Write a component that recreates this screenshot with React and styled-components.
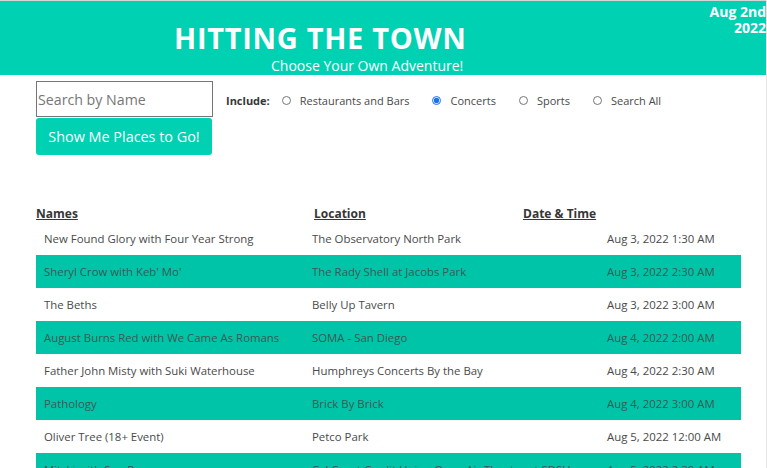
import styled, { createGlobalStyle } from "styled-components";

const GlobalStyle = createGlobalStyle`
  html, body {
    margin: 0;
    padding: 0;
    background: #ffffff;
    overflow: hidden;
  }
  body {
    font-family: "Open Sans", "Noto Sans", sans-serif;
    color: #4a4a4a;
  }
`;

const Page = styled.div`
  width: 766px;
  height: 468px;
  border-right: 1px solid #e6e6e6;
  overflow: hidden;
`;

const Header = styled.header`
  display: flex;
  height: 74px;
  background: #00d1b2;
  border-top: 1px solid #cfd8d6;
  color: #ffffff;
`;

const Titles = styled.div`
  display: flex;
  flex-direction: column;
  flex: 1;
`;

const Title = styled.h1`
  margin: 18px 0 0 174px;
  font-size: 29px;
  line-height: 38px;
  font-weight: 700;
  letter-spacing: 0.7px;
`;

const Subtitle = styled.div`
  margin: 0 0 0 271px;
  font-size: 14px;
  line-height: 18px;
`;

const DateStamp = styled.div`
  padding-top: 3px;
  text-align: right;
  font-weight: 700;
  font-size: 14px;
  line-height: 16px;
`;

const Controls = styled.div`
  display: flex;
  align-items: flex-start;
  padding: 6px 0 0 36px;
  gap: 13px;
`;

const SearchColumn = styled.div`
  display: flex;
  flex-direction: column;
  gap: 1px;
  width: 177px;
`;

const SearchInput = styled.input`
  box-sizing: border-box;
  width: 177px;
  height: 36px;
  padding: 0 1px;
  border: 1px solid #767676;
  font-family: inherit;
  font-size: 14.2px;
  color: #333;
  outline: none;

  &::placeholder {
    color: #767676;
  }
`;

const GoButton = styled.button`
  box-sizing: border-box;
  width: 176px;
  height: 37px;
  border: none;
  border-radius: 3px;
  background: #00d1b2;
  color: #ffffff;
  font-family: inherit;
  font-size: 14.4px;
  cursor: pointer;
`;

const Filters = styled.div`
  display: flex;
  align-items: center;
  height: 38px;
  font-size: 11px;
  color: #4a4a4a;
`;

const IncludeLabel = styled.span`
  font-weight: 700;
  color: #363636;
  margin-right: 12px;
`;

const RadioLabel = styled.label`
  display: flex;
  align-items: center;
  margin-right: ${({ $gap }) => $gap}px;

  input {
    width: 9px;
    height: 9px;
    margin: 0 9px 0 0;
    accent-color: #1a73e8;
  }
`;

const Table = styled.div`
  margin: 50px 25px 0 36px;
`;

const HeadRow = styled.div`
  display: grid;
  grid-template-columns: 278px 209px 1fr;
  height: 17px;
  font-size: 12px;
  font-weight: 700;
  color: #363636;

  span {
    text-decoration: underline;
  }
`;

const Row = styled.div`
  display: grid;
  grid-template-columns: 276px 295px 1fr;
  align-items: center;
  height: 33px;
  font-size: 11.4px;
  color: ${({ $shaded }) => ($shaded ? "#3d5a53" : "#4a4a4a")};
  background: ${({ $shaded }) => ($shaded ? "#00c4a7" : "#ffffff")};
  white-space: nowrap;
  overflow: hidden;
`;

const NameCell = styled.span`
  padding-left: 8px;
`;

const events = [
  ["New Found Glory with Four Year Strong", "The Observatory North Park", "Aug 3, 2022 1:30 AM"],
  ["Sheryl Crow with Keb' Mo'", "The Rady Shell at Jacobs Park", "Aug 3, 2022 2:30 AM"],
  ["The Beths", "Belly Up Tavern", "Aug 3, 2022 3:00 AM"],
  ["August Burns Red with We Came As Romans", "SOMA - San Diego", "Aug 4, 2022 2:00 AM"],
  ["Father John Misty with Suki Waterhouse", "Humphreys Concerts By the Bay", "Aug 4, 2022 2:30 AM"],
  ["Pathology", "Brick By Brick", "Aug 4, 2022 3:00 AM"],
  ["Oliver Tree (18+ Event)", "Petco Park", "Aug 5, 2022 12:00 AM"],
  ["Mitski with Sun Ra", "Cal Coast Credit Union Open Air Theatre at SDSU", "Aug 5, 2022 2:30 AM"],
];

const filters = [
  { label: "Restaurants and Bars", gap: 23 },
  { label: "Concerts", gap: 23, checked: true },
  { label: "Sports", gap: 23 },
  { label: "Search All", gap: 0 },
];

export default function App() {
  return (
    <Page>
      <GlobalStyle />
      <Header>
        <Titles>
          <Title>HITTING THE TOWN</Title>
          <Subtitle>Choose Your Own Adventure!</Subtitle>
        </Titles>
        <DateStamp>
          Aug 2nd
          <br />
          2022
        </DateStamp>
      </Header>
      <Controls>
        <SearchColumn>
          <SearchInput placeholder="Search by Name" />
          <GoButton>Show Me Places to Go!</GoButton>
        </SearchColumn>
        <Filters>
          <IncludeLabel>Include:</IncludeLabel>
          {filters.map((f) => (
            <RadioLabel key={f.label} $gap={f.gap}>
              <input type="radio" name="kind" defaultChecked={f.checked} />
              {f.label}
            </RadioLabel>
          ))}
        </Filters>
      </Controls>
      <Table>
        <HeadRow>
          <span>Names</span>
          <span>Location</span>
          <span>Date &amp; Time</span>
        </HeadRow>
        {events.map(([name, place, when], i) => (
          <Row key={name} $shaded={i % 2 === 1}>
            <NameCell>{name}</NameCell>
            <span>{place}</span>
            <span>{when}</span>
          </Row>
        ))}
      </Table>
    </Page>
  );
}
